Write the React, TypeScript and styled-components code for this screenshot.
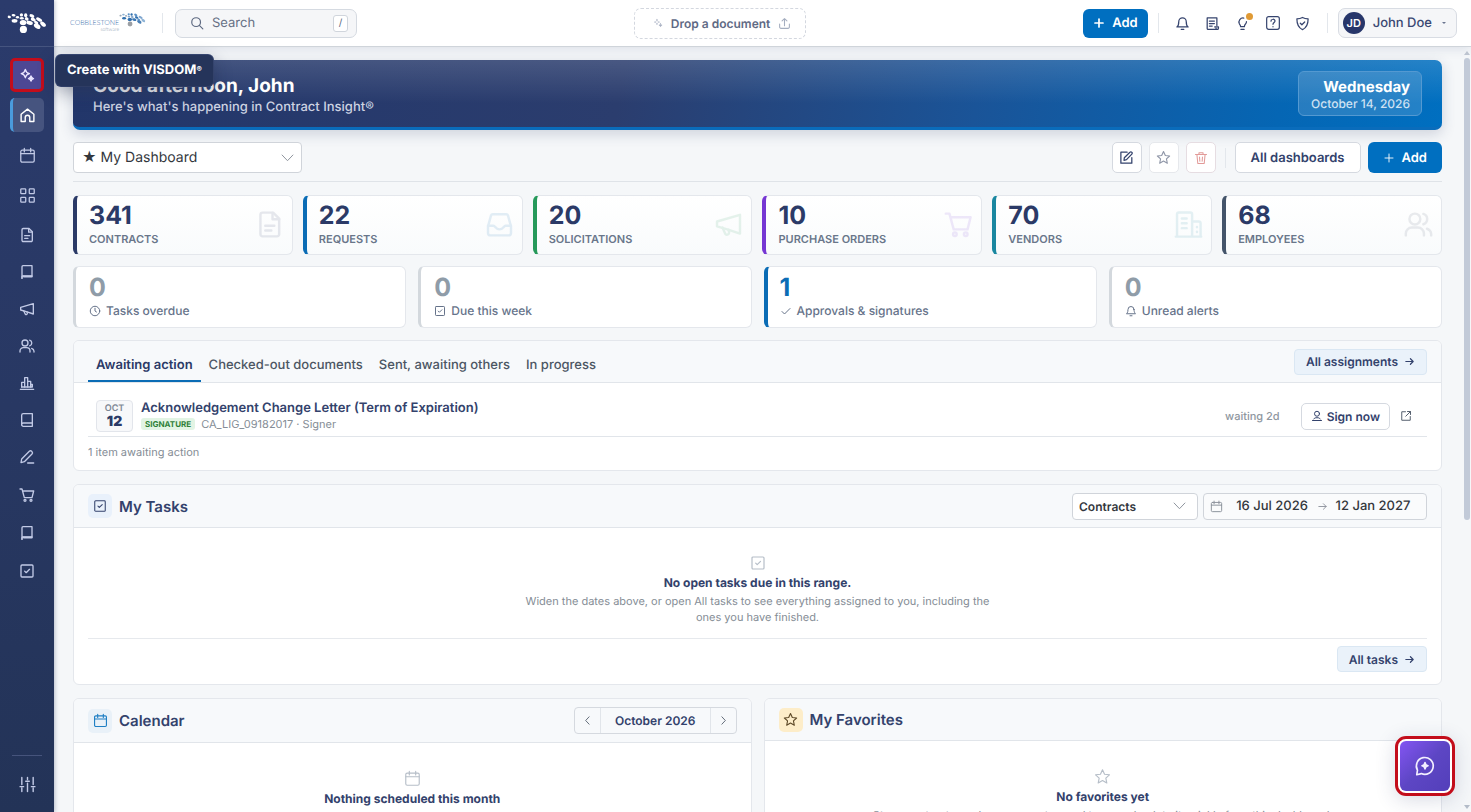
import React from "react";
import styled, { createGlobalStyle, css } from "styled-components";

const GlobalStyle = createGlobalStyle`
  *, *::before, *::after { box-sizing: border-box; }
  html, body { margin: 0; padding: 0; }
  body { background: #f5f7f9; color: #2b3a67; font-family: Inter, "Liberation Sans", sans-serif; font-size: 13px; text-rendering: geometricPrecision; }
  button, input, select { font: inherit; color: inherit; margin: 0; text-rendering: inherit; }
  button { cursor: pointer; }
  a { color: inherit; text-decoration: none; }
  h1, h2, h3, p, ul { margin: 0; padding: 0; list-style: none; }
`;

/* ---------- icons ---------- */

const icons: Record<string, React.ReactNode> = {
  search: (<><circle cx="10.5" cy="10.5" r="7.5" /><path d="M16 16l6 6" /></>),
  home: (<path d="M3 10.2 12 3l9 7.2V20.5h-5.8v-5.6a3.2 3.2 0 0 0-6.4 0v5.6H3z" />),
  calendar: (<><rect x="2.5" y="4.5" width="19" height="17" rx="2" /><path d="M2.5 9.5h19M7.5 2v5M16.5 2v5" /></>),
  grid: (<><rect x="2.5" y="2.5" width="7" height="7" rx="1" /><rect x="14.5" y="2.5" width="7" height="7" rx="1" /><rect x="2.5" y="14.5" width="7" height="7" rx="1" /><rect x="14.5" y="14.5" width="7" height="7" rx="1" /></>),
  file: (<><path d="M4.5 20V4A1.8 1.8 0 0 1 6.3 2.2H15l5 5V20a1.8 1.8 0 0 1-1.8 1.8H6.3A1.8 1.8 0 0 1 4.5 20z" /><path d="M14.5 2.5v5.2H20M8.5 13h7.5M8.5 17h5" /></>),
  journal: (<><path d="M4.5 21.500V4A1.500 1.500 0 0 1 6 2.500h13.500v15.800H6" /><path d="M4.500 21.500V19a1.200 1.200 0 0 1 1.200-1.200h13.800v1.500H7" /></>),
  megaphone: (<><path d="M21.500 4v15.500L11 16 2.500 13.500v-4z" /><path d="M7 14.500 9.500 20a1.800 1.800 0 0 0 3-1.500L12 16.300" /></>),
  users: (<><circle cx="9" cy="7.500" r="4.500" /><path d="M1.500 21v-1.500a5 5 0 0 1 5-5h5a5 5 0 0 1 5 5V21M16 3.200a4.500 4.500 0 0 1 0 8.600M19 15.500a5 5 0 0 1 3.500 4.500v1" /></>),
  chart: (<><path d="M2 21.500h20M4 18v-7h4.500v7M8.500 18V4H13v14M13 18V9.500h4.500V18" /><path d="M17.500 18v-4H20v4H4" /></>),
  book: (<path d="M4 19V5a2.500 2.500 0 0 1 2.500-2.500H20v19H6.500A2.500 2.500 0 0 1 4 19a2.500 2.500 0 0 1 2.500-2.500H20" />),
  pen: (<><path d="M3 20.500 4 15 15.500 3.500a2.500 2.500 0 0 1 3.500 0l.5.500a2.500 2.500 0 0 1 0 3.500L8 19z" /><path d="M13 21h9" /></>),
  cart: (<><path d="M1.500 3h3l3.500 13h11.500L22 6H5.500" /><circle cx="9" cy="20" r="1.500" /><circle cx="18" cy="20" r="1.500" /></>),
  check: (<><rect x="3" y="3" width="18" height="18" rx="1.500" /><path d="M8.500 12.200l2.300 2.300 5-5" /></>),
  sliders: (<path d="M4 2v10M4 17v5M1.500 15h5M12 2v3M12 10v12M9.500 7.500h5M20 2v10M20 17v5M17.500 15h5" />),
  bell: (<><path d="M18 9A6 6 0 0 0 6 9c0 6.500-3 8.500-3 8.500h18S18 15.500 18 9z" /><path d="M10 21.500h4" /></>),
  note: (<><path d="M19 15V3H3.500v17A1.500 1.500 0 0 0 5 21.500h14.500" /><path d="M7 8h8M7 12h8M7 16h4.500M15.500 17.500h6v2a2 2 0 0 1-4 0" /></>),
  bulb: (<><path d="M14 3.300A6.500 6.500 0 0 0 7 12.500c1.200 1.500 2 2.500 2 4.500h6c0-2 1-3.200 2-4.500.8-1 1.300-2.200 1.300-3.500" /><path d="M9.500 21.500h5" /></>),
  help: (<><rect x="2.500" y="2.500" width="19" height="19" rx="3" /><path d="M9 9.300c.2-4 6-3.800 6-.3 0 2.300-3 2.200-3 5M12 17.300v.4" /></>),
  shield: (<><path d="M12 2.300c3 1.800 6 2.200 9 2.200 0 8-1.500 14.200-9 17.300C4.500 18.700 3 12.500 3 4.500c3 0 6-.4 9-2.200z" /><path d="M8.500 11.500l2.500 2.500 4.500-4.500" /></>),
  upload: (<path d="M3 13v5.500A2.500 2.500 0 0 0 5.500 21h13a2.500 2.500 0 0 0 2.500-2.500V13M12 16V3M7.500 7.300 12 3l4.500 4.300" />),
  edit: (<><path d="M13 3.500H3v17.500h17.500V12" /><path d="M8 16.500l.5-4L17.500 3.500a1.900 1.900 0 0 1 2.800 0l.2.200a1.900 1.900 0 0 1 0 2.800L12 15.500z" /></>),
  star: (<path d="M12 2.500l2.900 6.300 6.900.8-5.100 4.700 1.400 6.900L12 17.700l-6.100 3.500 1.400-6.900L2.200 9.600l6.900-.8z" />),
  trash: (<path d="M2.500 6h19M8.500 5.500V3h7v2.500M5 6l1.500 15.500h11L19 6M9.500 10.500l.5 7M14.500 10.500l-.5 7" />),
  plus: (<path d="M12 4v16M4 12h16" />),
  inbox: (<><path d="M2.500 13.500 5 4.500A1.500 1.500 0 0 1 6.500 3.500h11A1.500 1.500 0 0 1 19 4.500l2.500 9v5.500a2 2 0 0 1-2 2h-15a2 2 0 0 1-2-2z" /><path d="M2.500 13H7c1.500 0 1.700 3 5 3s3.500-3 5-3h4.500" /></>),
  building: (<><path d="M2.500 22V3.500A1.500 1.500 0 0 1 4 2h9.500A1.500 1.500 0 0 1 15 3.500V22M15 9.500h5.500A1.500 1.500 0 0 1 22 11v11M1.500 22h21" /><path d="M6.500 7h4M6.500 11h4M6.500 15h4M19 14v.2M19 18v.2" /></>),
  clock: (<><circle cx="12" cy="12" r="9.500" /><path d="M12 6.500V12l3 2" /></>),
  tick: (<path d="M4 13l5 5L20 7" />),
  arrow: (<path d="M4 12h16M14 6l6 6-6 6" />),
  chevron: (<path d="M2 6.500 12 17 22 6.500" />),
  left: (<path d="M15.500 4 8 12l7.500 8" />),
  right: (<path d="M8.500 4l7.500 8-7.500 8" />),
  person: (<><circle cx="12" cy="7.500" r="5" /><path d="M3 21h18M5.500 18a5 5 0 0 1 4-2.500h5a5 5 0 0 1 4 2.500" /></>),
  external: (<><path d="M11 3.500H3.500v17h17V13" /><path d="M15 3h6v6M21 3 11.500 12.500" /></>),
  sparkles: (<><path d="M9.500 3.500c.8 4.200 1.800 5.400 6.200 6.300-4.400.9-5.400 2.100-6.200 6.300-.8-4.200-1.800-5.400-6.200-6.300 4.400-.9 5.400-2.100 6.200-6.300z" /><path fill="currentColor" d="M18 13.500c.5 2.500 1.300 3.300 3.800 3.800-2.500.5-3.300 1.300-3.800 3.800-.5-2.500-1.300-3.300-3.800-3.800 2.500-.5 3.300-1.300 3.800-3.800z" /></>),
  chat: (<><path d="M3 21.500l.8-5A9.200 9.200 0 1 1 8 20.300z" /><path fill="currentColor" d="M12 8.300c.4 2.400 1 3 3.300 3.400-2.300.4-2.900 1-3.300 3.400-.4-2.400-1-3-3.300-3.400 2.300-.4 2.900-1 3.300-3.400z" /></>),
};

const Svg = styled.svg`
  flex: none;
  display: block;
  fill: none;
  stroke: currentColor;
  stroke-linecap: round;
  stroke-linejoin: round;
`;

function Icon({ name, size = 16, weight = 2 }: { name: string; size?: number; weight?: number }) {
  return (
    <Svg width={size} height={size} viewBox="0 0 24 24" strokeWidth={weight} aria-hidden="true">
      {icons[name]}
    </Svg>
  );
}

const stones: [number, number, number, number, number, string][] = [
  [7, 12, 5, 4, 10, "#9aa7b5"], [20, 7, 6, 4, 5, "#8fb4d6"], [23, 24, 9, 6, 0, "#2f6fae"],
  [32, 13, 5, 4, 0, "#9aa7b5"], [44, 6, 5, 5, 0, "#5d93c7"], [49, 29, 10, 8, 0, "#2f6fae"],
  [45, 16, 6, 4, 0, "#7fa6cf"], [50, 50, 11, 11, 0, "#9b9fa4"], [57, 7, 5, 6, 0, "#2f6fae"],
  [60, 18, 6, 5, 30, "#89a9c9"], [69, 30, 10, 6, 15, "#3f7ab5"], [76, 9, 8, 5, 30, "#5d93c7"],
  [80, 20, 8, 5, 25, "#2f6fae"], [92, 40, 11, 7, 35, "#4a80b6"], [98, 20, 10, 5, 30, "#7fa6cf"],
  [89, 29, 7, 4, 30, "#5d93c7"], [110, 34, 10, 6, 40, "#8fb4d6"],
];

function Stones({ width, mono }: { width: number; mono?: boolean }) {
  return (
    <svg width={width} viewBox="0 0 122 62" aria-hidden="true">
      {stones.map(([x, y, rx, ry, r, color]) => (
        <ellipse key={x + "-" + y} cx={x} cy={y} rx={rx} ry={ry} transform={`rotate(${r} ${x} ${y})`} fill={mono ? "#fff" : color} />
      ))}
    </svg>
  );
}

/* ---------- shell ---------- */

const Shell = styled.div`
  display: flex;
  height: 100vh;
  overflow: hidden;
`;

const Sidebar = styled.nav`
  position: relative;
  z-index: 3;
  flex: none;
  width: 54px;
  display: flex;
  flex-direction: column;
  align-items: center;
  background: linear-gradient(180deg, #2b3b6c 0%, #283863 50%, #233357 100%);
  box-shadow: 1px 0 4px rgba(43, 58, 103, 0.3);
  color: #c2cae6;
`;

const SideLogo = styled.a`
  width: 100%;
  height: 47px;
  display: grid;
  place-items: center;
  border-bottom: 1px solid #45547f;
`;

const NavGroup = styled.ul<{ $gap: number; $top: number }>`
  display: flex;
  flex-direction: column;
  gap: ${(p) => p.$gap}px;
  padding-top: ${(p) => p.$top}px;
`;

const NavItem = styled.li`
  position: relative;
`;

const NavLink = styled.a<{ $tall?: boolean; $active?: boolean; $marked?: boolean }>`
  display: grid;
  place-items: center;
  width: 34px;
  height: ${(p) => (p.$tall ? 34 : 32)}px;
  border-radius: 5px;
  ${(p) => p.$active && css`
    background: #46547f;
    border-left: 3px solid #4a9bdc;
    padding-right: 3px;
    color: #fff;
  `}
  ${(p) => p.$marked && css`
    background: #4d4794;
    border: 3px solid #c30d1b;
    color: #eae4ff;
  `}
`;

const Tooltip = styled.span`
  position: absolute;
  left: 46px;
  top: -3px;
  padding: 0 11px;
  line-height: 31px;
  border-radius: 5px;
  background: #25345a;
  color: #fff;
  font-size: 13px;
  font-weight: 700;
  white-space: nowrap;
  box-shadow: 0 6px 18px rgba(20, 30, 60, 0.4), 0 0 0 1px #3a4a75;
  small { font-size: 8px; vertical-align: 2px; line-height: 8px; }
`;

const SideFoot = styled.div`
  margin-top: auto;
  margin-bottom: 12px;
  width: 30px;
  border-top: 1px solid #46547c;
  padding-top: 12px;
  display: flex;
  justify-content: center;
`;

const Column = styled.div`
  flex: 1;
  min-width: 0;
  display: flex;
  flex-direction: column;
`;

const TopBar = styled.header`
  position: relative;
  z-index: 2;
  flex: none;
  height: 47px;
  display: flex;
  align-items: center;
  justify-content: space-between;
  padding: 0 14px 0 16px;
  background: #fff;
  border-bottom: 1px solid #cfd4da;
  box-shadow: 0 2px 10px rgba(43, 58, 103, 0.12);
`;

const BarSide = styled.div`
  display: flex;
  align-items: center;
`;

const Brand = styled.a`
  display: flex;
  align-items: flex-start;
  justify-content: space-between;
  width: 76px;
  margin-right: 4px;
  font-family: Lato, sans-serif;
  font-size: 7px;
  font-weight: 300;
  line-height: 7px;
  color: #3b70ac;
  text-align: right;
`;

const BrandName = styled.span`
  padding-top: 7px;
`;

const BrandSub = styled.small`
  display: block;
  font-size: 5px;
  line-height: 6px;
  color: #8b9bb0;
`;

const Rule = styled.span<{ $space: number }>`
  width: 1px;
  height: 20px;
  margin: 0 ${(p) => p.$space}px;
  background: #e3e7ec;
`;

const SearchBox = styled.label`
  display: flex;
  align-items: center;
  gap: 8px;
  width: 182px;
  height: 29px;
  padding: 0 8px 0 14px;
  border: 1px solid #d5dae1;
  border-radius: 7px;
  background: #f5f6f8;
  color: #5c6880;
  input {
    flex: 1;
    min-width: 0;
    border: 0;
    padding: 0;
    background: transparent;
    outline: none;
    &::placeholder { color: #667085; opacity: 1; }
  }
  kbd {
    width: 15px;
    height: 17px;
    border: 1px solid #d0d5dc;
    border-radius: 3px;
    background: #fff;
    font: 10px/15px Inter, sans-serif;
    text-align: center;
  }
`;

const DropButton = styled.button`
  display: flex;
  align-items: center;
  gap: 8px;
  height: 31px;
  padding: 0 14px 0 18px;
  border: 1px dashed #d3d7df;
  border-radius: 7px;
  background: #fff;
  color: #5f6a85;
  font-size: 12px;
  font-weight: 600;
  svg { color: #a5aec0; }
`;

const Primary = styled.button<{ $h: number }>`
  display: flex;
  align-items: center;
  gap: 7px;
  height: ${(p) => p.$h}px;
  padding: 0 ${(p) => (p.$h > 30 ? 15 : 10)}px;
  border: 0;
  border-radius: 6px;
  background: #006fc0;
  color: #fff;
  font-weight: 600;
`;

const TopIcons = styled.div`
  display: flex;
  gap: 14px;
  padding: 0 6px;
`;

const IconButton = styled.button`
  position: relative;
  display: grid;
  place-items: center;
  width: 16px;
  height: 20px;
  padding: 0;
  border: 0;
  background: none;
  color: #36446e;
`;

const Dot = styled.i`
  position: absolute;
  top: 0;
  right: -2px;
  width: 7px;
  height: 7px;
  border-radius: 50%;
  background: #e09a35;
`;

const UserButton = styled.button`
  display: flex;
  align-items: center;
  gap: 8px;
  height: 30px;
  padding: 0 10px 0 4px;
  border: 1px solid #d8dce3;
  border-radius: 7px;
  background: #f5f6f8;
  color: #3a4872;
  font-weight: 500;
`;

const Avatar = styled.span`
  width: 22px;
  line-height: 22px;
  border-radius: 50%;
  background: #27366a;
  color: #fff;
  font-size: 11px;
  font-weight: 600;
`;

const Caret = styled.i`
  width: 0;
  margin-left: 2px;
  border: 2px solid transparent;
  border-top-color: #6b758f;
  border-bottom: 0;
`;

const Body = styled.div`
  flex: 1;
  min-height: 0;
  display: flex;
`;

const Main = styled.main`
  flex: 1;
  min-width: 0;
  overflow-y: auto;
  scrollbar-width: none;
  padding: 13px 20px 20px 19px;
`;

const Rail = styled.div`
  flex: none;
  width: 9px;
  display: flex;
  flex-direction: column;
  align-items: center;
  padding: 4px 0 3px;
  &::before, &::after {
    content: "";
    border: 3px solid transparent;
  }
  &::before { border-bottom: 4px solid #c0c7d2; border-top: 0; }
  &::after { border-top: 4px solid #b4bcc9; border-bottom: 0; margin-top: auto; }
`;

const Thumb = styled.div`
  width: 6px;
  height: 61%;
  margin-top: 3px;
  border-radius: 3px;
  background: #c2cad8;
`;

/* ---------- dashboard ---------- */

const Banner = styled.section`
  display: flex;
  align-items: center;
  justify-content: space-between;
  min-height: 70px;
  padding: 0 20px;
  border-bottom: 3px solid #0a6cbb;
  border-radius: 7px;
  background:
    linear-gradient(180deg, rgba(255, 255, 255, 0.14) 0%, rgba(255, 255, 255, 0) 65%),
    linear-gradient(100deg, #22366a 0%, #2b3d6e 40%, #1a5498 66%, #0566b4 88%, #006fc0 100%);
  box-shadow: 0 4px 14px rgba(43, 58, 103, 0.2);
  color: #fff;
  h1 { padding-top: 2px; font-size: 19px; line-height: 24px; font-weight: 700; }
  p { font-size: 13px; line-height: 18px; font-weight: 500; color: #cdd3e2; }
`;

const DateCard = styled.div`
  padding: 6px 11px 4px 12px;
  border: 1px solid #5499d1;
  border-radius: 6px;
  background: rgba(255, 255, 255, 0.14);
  text-align: right;
  strong { display: block; font-size: 15px; line-height: 18px; }
  span { display: block; font-size: 12px; line-height: 15px; font-weight: 500; color: #cfe2f3; }
`;

const Toolbar = styled.div`
  display: flex;
  align-items: center;
  gap: 7px;
  padding: 12px 0 8px;
  border-bottom: 1px solid #dfe3e8;
`;

const SelectWrap = styled.div<{ $w: number; $h: number; $push?: boolean; $strong?: boolean }>`
  position: relative;
  width: ${(p) => p.$w}px;
  ${(p) => p.$push && "margin-right: auto;"}
  select {
    appearance: none;
    display: block;
    width: 100%;
    height: ${(p) => p.$h}px;
    padding: 0 32px 0 ${(p) => (p.$strong ? 6 : 8)}px;
    border: 1px solid #d0d4da;
    border-radius: 4px;
    background: #fff;
    color: #33373d;
    font-size: ${(p) => (p.$strong ? 12 : 14)}px;
    font-weight: ${(p) => (p.$strong ? 600 : 400)};
  }
  svg {
    position: absolute;
    right: ${(p) => (p.$strong ? 12 : 8)}px;
    top: 50%;
    transform: translateY(-50%);
    color: #8c929b;
    pointer-events: none;
  }
`;

const Tool = styled.button<{ $tone: string; $border: string }>`
  display: grid;
  place-items: center;
  width: 30px;
  height: 31px;
  padding: 0;
  border: 1px solid ${(p) => p.$border};
  border-radius: 5px;
  background: #fff;
  color: ${(p) => p.$tone};
`;

const Outline = styled.button<{ $small?: boolean }>`
  display: flex;
  align-items: center;
  gap: 4px;
  height: ${(p) => (p.$small ? 27 : 31)}px;
  padding: 0 ${(p) => (p.$small ? 9 : 15)}px;
  border: 1px solid #d5d9e0;
  border-radius: 5px;
  background: #fff;
  color: #33426c;
  font-weight: 600;
  font-size: ${(p) => (p.$small ? 12 : 13)}px;
`;

const Grid = styled.div<{ $cols: number; $gap: number; $top: number }>`
  display: grid;
  grid-template-columns: repeat(${(p) => p.$cols}, minmax(0, 1fr));
  gap: ${(p) => p.$gap}px;
  margin-top: ${(p) => p.$top}px;
`;

const cardFrame = css`
  border: 1px solid #e4e7ec;
  border-radius: 6px;
  background: #fff;
`;

const Stat = styled.a<{ $color: string }>`
  ${cardFrame}
  display: flex;
  align-items: center;
  justify-content: space-between;
  height: 60px;
  padding: 0 8px 1px 12px;
  border-left: 4px solid ${(p) => p.$color};
  background: linear-gradient(180deg, #fff, #f9fbfc);
  > svg { color: ${(p) => p.$color}; opacity: 0.11; }
`;

const StatNumber = styled.strong<{ $tone?: string }>`
  display: block;
  font-size: 25px;
  line-height: 28px;
  font-weight: 700;
  color: ${(p) => p.$tone || "#2b3a67"};
`;

const StatLabel = styled.span`
  display: block;
  padding-top: 1px;
  font-size: 11px;
  line-height: 16px;
  font-weight: 600;
  text-transform: uppercase;
  color: #69768a;
`;

const Alert = styled.a<{ $on?: boolean }>`
  ${cardFrame}
  display: block;
  height: 62px;
  padding: 7px 12px 0 ${(p) => (p.$on ? 12 : 13)}px;
  border-left: ${(p) => (p.$on ? "4px solid #0b6cb5" : "3px solid #d3d8dd")};
`;

const AlertLabel = styled.span`
  display: flex;
  align-items: center;
  gap: 5px;
  font-size: 12px;
  line-height: 17px;
  font-weight: 500;
  color: #66738a;
`;

const Panel = styled.section<{ $top?: number }>`
  ${cardFrame}
  margin-top: ${(p) => p.$top || 0}px;
  overflow: hidden;
`;

const PanelHead = styled.header<{ $h: number }>`
  display: flex;
  align-items: center;
  gap: 5px;
  height: ${(p) => p.$h}px;
  padding: 0 14px;
  border-bottom: 1px solid #e1e5ea;
  background: #f7f9fb;
  h2 { margin-right: auto; padding-left: 2px; font-size: 15px; font-weight: 600; color: #33426c; }
`;

const Tabs = styled.div`
  display: flex;
  align-self: flex-end;
  margin-right: auto;
`;

const Tab = styled.button<{ $on?: boolean }>`
  height: 33px;
  padding: 0 8px;
  border: 0;
  border-bottom: 2px solid ${(p) => (p.$on ? "#0b6cb5" : "transparent")};
  background: none;
  font-weight: ${(p) => (p.$on ? 600 : 500)};
  color: ${(p) => (p.$on ? "#2b3a67" : "#4c5663")};
`;

const Soft = styled.a`
  display: flex;
  align-items: center;
  gap: 6px;
  height: 26px;
  padding: 0 11px;
  border: 1px solid #dae7f3;
  border-radius: 4px;
  background: #eaf2fa;
  font-size: 12px;
  font-weight: 600;
  color: #33426c;
`;

const Item = styled.div`
  display: flex;
  align-items: center;
  margin: 0 14px;
  padding: 17px 15px 4px 8px;
  border-bottom: 1px solid #e1e5ea;
`;

const DateBox = styled.time`
  width: 37px;
  height: 32px;
  padding-top: 2px;
  border: 1px solid #e2e5eb;
  border-radius: 4px;
  background: #f7f8fa;
  text-align: center;
  font-size: 9px;
  line-height: 11px;
  font-weight: 600;
  color: #7d8794;
  strong { display: block; font-size: 14px; line-height: 16px; color: #2b3a67; }
`;

const ItemText = styled.div`
  flex: 1;
  padding-left: 8px;
  h3 { font-size: 13px; line-height: 16px; font-weight: 600; color: #33426c; }
  p { display: flex; align-items: center; gap: 6px; font-size: 11px; line-height: 16px; color: #858d96; }
`;

const Badge = styled.span`
  padding: 0 4px;
  border-radius: 3px;
  background: #e2f4e4;
  font-size: 8px;
  line-height: 12px;
  font-weight: 700;
  color: #2e8038;
`;

const Waiting = styled.span`
  padding-right: 21px;
  font-size: 11px;
  font-weight: 500;
  color: #8f979f;
`;

const OpenLink = styled.a`
  padding-left: 10px;
  color: #56606f;
`;

const PanelNote = styled.p`
  padding: 6px 14px 9px;
  font-size: 11px;
  line-height: 18px;
  color: #858d96;
`;

const HeadIcon = styled.span<{ $bg: string; $fg: string }>`
  display: grid;
  place-items: center;
  width: 24px;
  height: 24px;
  border-radius: 5px;
  background: ${(p) => p.$bg};
  color: ${(p) => p.$fg};
`;

const DateRange = styled.div`
  display: flex;
  align-items: center;
  height: 27px;
  width: 224px;
  padding: 0 8px 0 6px;
  border: 1px solid #d0d4da;
  border-radius: 4px;
  background: #fafbfc;
  color: #8c929b;
  input {
    flex: 1;
    min-width: 0;
    border: 0;
    padding: 0;
    background: transparent;
    text-align: center;
    font-size: 13px;
    font-weight: 500;
    color: #33373d;
  }
  > svg:first-child { margin-right: 4px; }
`;

const Empty = styled.div<{ $line?: boolean }>`
  display: flex;
  flex-direction: column;
  align-items: center;
  margin: 0 14px;
  padding: ${(p) => (p.$line ? "27px 0 13px" : "27px 0 20px")};
  border-bottom: ${(p) => (p.$line ? "1px solid #e6e9ed" : "0")};
  text-align: center;
  svg { color: #b6bec8; }
  strong { padding-top: 3px; font-size: 12px; line-height: 18px; font-weight: 700; color: #33426c; }
  p { max-width: 480px; padding-top: 1px; font-size: 11px; line-height: 16px; color: #858d96; }
`;

const PanelFoot = styled.footer`
  display: flex;
  justify-content: flex-end;
  padding: 7px 14px 12px;
`;

const MonthPicker = styled.div`
  display: flex;
  height: 27px;
  border: 1px solid #d5d9df;
  border-radius: 4px;
  button { display: grid; place-items: center; width: 25px; padding: 0; border: 0; background: none; color: #56606f; }
  span { padding: 0 14px; border: 1px solid #e1e5ea; border-width: 0 1px; line-height: 25px; font-size: 12px; font-weight: 600; color: #33426c; }
`;

const Assistant = styled.button`
  position: fixed;
  z-index: 4;
  right: 16px;
  bottom: 16px;
  width: 60px;
  height: 60px;
  padding: 2px;
  border: 3px solid #c30d1b;
  border-radius: 11px;
  background: #fff;
  box-shadow: 0 4px 20px rgba(43, 58, 103, 0.18);
  span {
    display: grid;
    place-items: center;
    height: 100%;
    border-radius: 6px;
    background: linear-gradient(135deg, #8355f2 0%, #5d46c4 50%, #533fba 100%);
    color: #f3efff;
  }
`;

const lowerNavA = ["file", "journal", "megaphone", "users", "chart", "book", "pen"];
const lowerNavB = ["cart", "journal", "check"];

const stats = [
  { n: 341, label: "Contracts", color: "#2b3a67", icon: "file" },
  { n: 22, label: "Requests", color: "#0b6cb5", icon: "inbox" },
  { n: 20, label: "Solicitations", color: "#26995a", icon: "megaphone" },
  { n: 10, label: "Purchase orders", color: "#7637d3", icon: "cart" },
  { n: 70, label: "Vendors", color: "#1a87a0", icon: "building" },
  { n: 68, label: "Employees", color: "#44546a", icon: "users" },
];

const alerts = [
  { n: 0, label: "Tasks overdue", icon: "clock" },
  { n: 0, label: "Due this week", icon: "check" },
  { n: 1, label: "Approvals & signatures", icon: "tick" },
  { n: 0, label: "Unread alerts", icon: "bell" },
];

function NavList({ names, gap, top }: { names: string[]; gap: number; top: number }) {
  return (
    <NavGroup $gap={gap} $top={top}>
      {names.map((name) => (
        <NavItem key={name}>
          <NavLink href="#" aria-label={name}><Icon name={name} /></NavLink>
        </NavItem>
      ))}
    </NavGroup>
  );
}

export default function App() {
  return (
    <>
      <GlobalStyle />
      <Shell>
        <Sidebar aria-label="Main">
          <SideLogo href="#" aria-label="Home"><Stones width={40} mono /></SideLogo>
          <NavGroup $gap={6} $top={11}>
            <NavItem>
              <NavLink href="#" $tall $marked aria-labelledby="visdom-tip"><Icon name="sparkles" weight={2} /></NavLink>
              <Tooltip id="visdom-tip" role="tooltip">Create with VISDOM<small>®</small></Tooltip>
            </NavItem>
            <NavItem><NavLink href="#" $tall $active aria-label="Dashboard"><Icon name="home" size={17} /></NavLink></NavItem>
            <NavItem><NavLink href="#" $tall aria-label="Calendar"><Icon name="calendar" size={17} weight={1.8} /></NavLink></NavItem>
            <NavItem><NavLink href="#" $tall aria-label="Applications"><Icon name="grid" size={17} weight={1.8} /></NavLink></NavItem>
          </NavGroup>
          <NavList names={lowerNavA} gap={5} top={7} />
          <NavList names={lowerNavB} gap={6} top={6} />
          <SideFoot><NavLink href="#" aria-label="Preferences"><Icon name="sliders" size={17} /></NavLink></SideFoot>
        </Sidebar>

        <Column>
          <TopBar>
            <BarSide>
              <Brand href="#">
                <BrandName>COBBLESTONE<BrandSub>software</BrandSub></BrandName>
                <Stones width={32} />
              </Brand>
              <Rule $space={12} />
              <SearchBox>
                <Icon name="search" size={14} />
                <input type="text" placeholder="Search" aria-label="Search" />
                <kbd>/</kbd>
              </SearchBox>
            </BarSide>
            <DropButton><Icon name="sparkles" size={10} weight={1.5} />Drop a document<Icon name="upload" size={13} /></DropButton>
            <BarSide>
              <Primary $h={29}><Icon name="plus" size={12} weight={3.4} />Add</Primary>
              <Rule $space={10} />
              <TopIcons>
                <IconButton aria-label="Notifications"><Icon name="bell" size={15} /></IconButton>
                <IconButton aria-label="Notes"><Icon name="note" size={15} /></IconButton>
                <IconButton aria-label="Tips"><Icon name="bulb" size={15} /><Dot /></IconButton>
                <IconButton aria-label="Help"><Icon name="help" size={16} weight={1.8} /></IconButton>
                <IconButton aria-label="Security"><Icon name="shield" size={15} /></IconButton>
              </TopIcons>
              <Rule $space={10} />
              <UserButton><Avatar>JD</Avatar>John Doe<Caret /></UserButton>
            </BarSide>
          </TopBar>

          <Body>
            <Main>
              <Banner>
                <div>
                  <h1>Good afternoon, John</h1>
                  <p>Here's what's happening in Contract Insight®</p>
                </div>
                <DateCard><strong>Wednesday</strong><span>October 14, 2026</span></DateCard>
              </Banner>

              <Toolbar>
                <SelectWrap $w={229} $h={31} $push>
                  <select aria-label="Dashboard"><option>★ My Dashboard</option></select>
                  <Icon name="chevron" size={13} weight={1.8} />
                </SelectWrap>
                <Tool $tone="#33426c" $border="#d5d9e0" aria-label="Edit dashboard"><Icon name="edit" size={15} /></Tool>
                <Tool $tone="#9097a8" $border="#e6e8ec" aria-label="Set as favorite"><Icon name="star" size={15} weight={1.8} /></Tool>
                <Tool $tone="#e29a98" $border="#e6dde2" aria-label="Delete dashboard"><Icon name="trash" size={14} weight={1.8} /></Tool>
                <Rule $space={2} />
                <Outline>All dashboards</Outline>
                <Primary $h={31}><Icon name="plus" size={12} weight={1.8} />Add</Primary>
              </Toolbar>

              <Grid $cols={6} $gap={10} $top={13}>
                {stats.map((s) => (
                  <Stat key={s.label} href="#" $color={s.color}>
                    <div>
                      <StatNumber>{s.n}</StatNumber>
                      <StatLabel>{s.label}</StatLabel>
                    </div>
                    <Icon name={s.icon} size={29} weight={2} />
                  </Stat>
                ))}
              </Grid>

              <Grid $cols={4} $gap={12} $top={11}>
                {alerts.map((a) => (
                  <Alert key={a.label} href="#" $on={a.n > 0}>
                    <StatNumber $tone={a.n > 0 ? "#0b6cb5" : "#8f9ca8"}>{a.n}</StatNumber>
                    <AlertLabel><Icon name={a.icon} size={12} />{a.label}</AlertLabel>
                  </Alert>
                ))}
              </Grid>

              <Panel $top={12}>
                <PanelHead $h={42}>
                  <Tabs role="tablist">
                    <Tab role="tab" aria-selected $on>Awaiting action</Tab>
                    <Tab role="tab">Checked-out documents</Tab>
                    <Tab role="tab">Sent, awaiting others</Tab>
                    <Tab role="tab">In progress</Tab>
                  </Tabs>
                  <Soft href="#">All assignments<Icon name="arrow" size={11} weight={2.6} /></Soft>
                </PanelHead>
                <Item>
                  <DateBox>OCT<strong>12</strong></DateBox>
                  <ItemText>
                    <h3>Acknowledgement Change Letter (Term of Expiration)</h3>
                    <p><Badge>SIGNATURE</Badge>CA_LIG_09182017 · Signer</p>
                  </ItemText>
                  <Waiting>waiting 2d</Waiting>
                  <Outline $small><Icon name="person" size={12} />Sign now</Outline>
                  <OpenLink href="#" aria-label="Open"><Icon name="external" size={12} weight={2} /></OpenLink>
                </Item>
                <PanelNote>1 item awaiting action</PanelNote>
              </Panel>

              <Panel $top={13}>
                <PanelHead $h={43}>
                  <HeadIcon $bg="#e9f1fb" $fg="#33426c"><Icon name="check" size={14} weight={1.8} /></HeadIcon>
                  <h2>My Tasks</h2>
                  <SelectWrap $w={126} $h={27} $strong>
                    <select aria-label="Task area"><option>Contracts</option></select>
                    <Icon name="chevron" size={13} weight={1.8} />
                  </SelectWrap>
                  <DateRange>
                    <Icon name="calendar" size={13} weight={1.8} />
                    <input type="text" defaultValue="16 Jul 2026" aria-label="Start date" />
                    <Icon name="arrow" size={11} weight={2} />
                    <input type="text" defaultValue="12 Jan 2027" aria-label="End date" />
                  </DateRange>
                </PanelHead>
                <Empty $line>
                  <Icon name="check" size={16} weight={1.8} />
                  <strong>No open tasks due in this range.</strong>
                  <p>Widen the dates above, or open All tasks to see everything assigned to you, including the ones you have finished.</p>
                </Empty>
                <PanelFoot><Soft href="#">All tasks<Icon name="arrow" size={11} weight={2.6} /></Soft></PanelFoot>
              </Panel>

              <Grid $cols={2} $gap={12} $top={13}>
                <Panel>
                  <PanelHead $h={44}>
                    <HeadIcon $bg="#e9f1f8" $fg="#1f7fc4"><Icon name="calendar" size={15} weight={1.8} /></HeadIcon>
                    <h2>Calendar</h2>
                    <MonthPicker>
                      <button aria-label="Previous month"><Icon name="left" size={11} /></button>
                      <span>October 2026</span>
                      <button aria-label="Next month"><Icon name="right" size={11} /></button>
                    </MonthPicker>
                  </PanelHead>
                  <Empty>
                    <Icon name="calendar" size={17} weight={1.6} />
                    <strong>Nothing scheduled this month</strong>
                    <p>Move to another month to look for other dates.</p>
                  </Empty>
                </Panel>
                <Panel>
                  <PanelHead $h={42}>
                    <HeadIcon $bg="#fdedc9" $fg="#5e4a28"><Icon name="star" size={15} weight={1.8} /></HeadIcon>
                    <h2>My Favorites</h2>
                  </PanelHead>
                  <Empty>
                    <Icon name="star" size={17} weight={1.6} />
                    <strong>No favorites yet</strong>
                    <p>Star a contract, vendor or request record to come back to it quickly from this dashboard.</p>
                  </Empty>
                </Panel>
              </Grid>
            </Main>
            <Rail aria-hidden="true"><Thumb /></Rail>
          </Body>
        </Column>
      </Shell>
      <Assistant aria-label="Ask VISDOM"><span><Icon name="chat" size={22} weight={1.8} /></span></Assistant>
    </>
  );
}
